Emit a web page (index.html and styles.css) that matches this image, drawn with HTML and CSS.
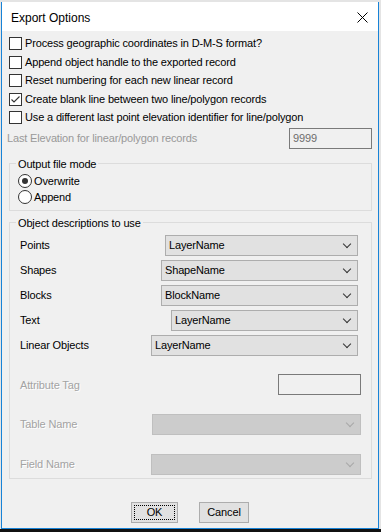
FILE: index.html
```html
<!DOCTYPE html>
<html lang="en">
  <head>
    <meta charset="UTF-8" />
    <title>Export Options</title>
    <link rel="stylesheet" href="styles.css">
  </head>
  <body>
    <div class="window">
      <div class="titlebar">
        <span class="title">Export Options</span>
        <svg class="close" width="11" height="11" viewBox="0 0 11 11">
          <path d="M0.5 0.5 L10.5 10.5 M10.5 0.5 L0.5 10.5" stroke="#000" stroke-width="1" />
        </svg>
      </div>

      <div class="content">
        <div class="checks">
          <div class="check"><span class="box"></span><span>Process geographic coordinates in D-M-S format?</span></div>
          <div class="check"><span class="box"></span><span>Append object handle to the exported record</span></div>
          <div class="check"><span class="box"></span><span>Reset numbering for each new linear record</span></div>
          <div class="check">
            <span class="box">
              <svg width="11" height="11" viewBox="0 0 11 11">
                <path d="M1.5 5.5 L4 8 L9.5 2.5" fill="none" stroke="#333" stroke-width="1.1" />
              </svg>
            </span><span>Create blank line between two line/polygon records</span>
          </div>
          <div class="check"><span class="box"></span><span>Use a different last point elevation identifier for line/polygon</span></div>
        </div>

        <div class="elev-row">
          <span class="disabled">Last Elevation for linear/polygon records</span>
          <span class="textbox elev">9999</span>
        </div>

        <fieldset class="group output">
          <legend>Output file mode</legend>
          <div class="radio"><span class="dot on"></span>Overwrite</div>
          <div class="radio"><span class="dot"></span>Append</div>
        </fieldset>

        <fieldset class="group objects">
          <legend>Object descriptions to use</legend>
          <div class="row">
            <span>Points</span>
            <span class="combo w-points">LayerName<i class="chev"></i></span>
          </div>
          <div class="row">
            <span>Shapes</span>
            <span class="combo w-shapes">ShapeName<i class="chev"></i></span>
          </div>
          <div class="row">
            <span>Blocks</span>
            <span class="combo w-shapes">BlockName<i class="chev"></i></span>
          </div>
          <div class="row">
            <span>Text</span>
            <span class="combo w-text">LayerName<i class="chev"></i></span>
          </div>
          <div class="row">
            <span>Linear Objects</span>
            <span class="combo w-linear">LayerName<i class="chev"></i></span>
          </div>

          <div class="row wide attr">
            <span class="disabled etched">Attribute Tag</span>
            <span class="textbox attr-box"></span>
          </div>
          <div class="row wide spaced">
            <span class="disabled etched">Table Name</span>
            <span class="combo off w-table"><i class="chev"></i></span>
          </div>
          <div class="row wide spaced">
            <span class="disabled etched">Field Name</span>
            <span class="combo off w-field"><i class="chev"></i></span>
          </div>
        </fieldset>

        <div class="buttons">
          <button class="btn ok"><span class="focus">OK</span></button>
          <button class="btn cancel">Cancel</button>
        </div>
      </div>
    </div>
    <div class="taskbar"></div>
  </body>
</html>
```

FILE: styles.css
```css
/* Global */
body {
  margin: 0;
  background: #e4e4e4;
  font-family: "Liberation Sans", Arial, sans-serif;
  font-size: 11px;
  letter-spacing: -0.15px;
  color: #000;
}

.window {
  margin: 2px 0 0 1px;
  width: 376px;
  height: 526px;
  border: 1px solid #1883d7;
  border-top: none;
  background: #f0f0f0;
  display: flex;
  flex-direction: column;
}

.taskbar {
  height: 3px;
  background: #111;
}

/* Title bar */
.titlebar {
  height: 29px;
  background: #fff;
  display: flex;
  align-items: center;
  justify-content: space-between;
  padding: 0 10px 0 9px;
}

.title {
  font-size: 12px;
  letter-spacing: 0;
  margin-top: 2px;
}

.close {
  margin-top: 2px;
}

.content {
  padding: 6px 0 0 7px;
}

/* Checkboxes */
.check {
  height: 18.5px;
  display: flex;
  align-items: flex-start;
  white-space: nowrap;
  line-height: 13px;
}

.box {
  width: 11px;
  height: 11px;
  border: 1px solid #333;
  background: #fff;
  margin-right: 3px;
  flex: none;
}

.box svg {
  display: block;
}

/* Last elevation */
.elev-row {
  display: flex;
  align-items: center;
  justify-content: space-between;
  margin: -2px 6px 0 -2px;
  height: 21px;
}

.disabled {
  color: #999;
}

.etched {
  color: #a3a3a3;
  text-shadow: 1px 1px 0 #fff;
}

.textbox {
  box-sizing: border-box;
  height: 21px;
  border: 1px solid #7a7a7a;
  background: #f0f0f0;
  color: #6d6d6d;
  padding: 3px 3px;
}

.elev {
  width: 83px;
}

/* Group boxes */
.group {
  margin: 7px 6px 0 0;
  border: 1px solid #dcdcdc;
}

.group legend {
  padding: 0 2px;
  line-height: 16px;
}

.output {
  padding: 1px 0 5px 8px;
}

.output legend {
  margin-left: -2px;
}

.radio {
  height: 16px;
  display: flex;
  align-items: center;
}

.dot {
  width: 12px;
  height: 12px;
  border: 1px solid #333;
  border-radius: 50%;
  background: #fff;
  margin-right: 2px;
  display: flex;
  align-items: center;
  justify-content: center;
}

.dot.on::after {
  content: "";
  width: 6px;
  height: 6px;
  border-radius: 50%;
  background: #333;
}

/* Object descriptions */
.objects {
  margin-top: 4px;
  padding: 4px 13px 3px 10px;
}

.objects legend {
  margin-left: -4px;
}

.row {
  display: flex;
  align-items: center;
  justify-content: space-between;
  height: 21px;
  margin-bottom: 4px;
}

.row.wide {
  margin-right: -3px;
  margin-bottom: 0;
}

.row.attr {
  margin-top: 19px;
  height: 20px;
}

.row.spaced {
  margin-top: 19px;
}

.combo {
  box-sizing: border-box;
  height: 21px;
  border: 1px solid #adadad;
  background: #e1e1e1;
  display: flex;
  align-items: center;
  padding-left: 3px;
  position: relative;
}

.combo.off {
  background: #cccccc;
  border-color: #bfbfbf;
}

.chev {
  position: absolute;
  right: 7px;
  top: 5px;
  width: 5px;
  height: 5px;
  border-right: 1px solid #333;
  border-bottom: 1px solid #333;
  transform: rotate(45deg);
}

.combo.off .chev {
  border-color: #a8a8a8;
}

.w-points { width: 193px; }
.w-shapes { width: 197px; }
.w-text { width: 187px; }
.w-linear { width: 207px; }
.w-table { width: 209px; }
.w-field { width: 210px; }

.attr-box {
  width: 83px;
}

/* Buttons */
.buttons {
  display: flex;
  gap: 21px;
  margin: 23px 0 0 122px;
}

.btn {
  box-sizing: border-box;
  height: 21px;
  border: 1px solid #adadad;
  background: #e1e1e1;
  font-family: inherit;
  font-size: 11px;
  letter-spacing: -0.15px;
  padding: 0;
}

.ok {
  width: 47px;
  padding: 2px;
}

.ok .focus {
  display: block;
  height: 100%;
  border: 1px dotted #000;
  box-sizing: border-box;
  line-height: 13px;
}

.cancel {
  width: 50px;
}
```
